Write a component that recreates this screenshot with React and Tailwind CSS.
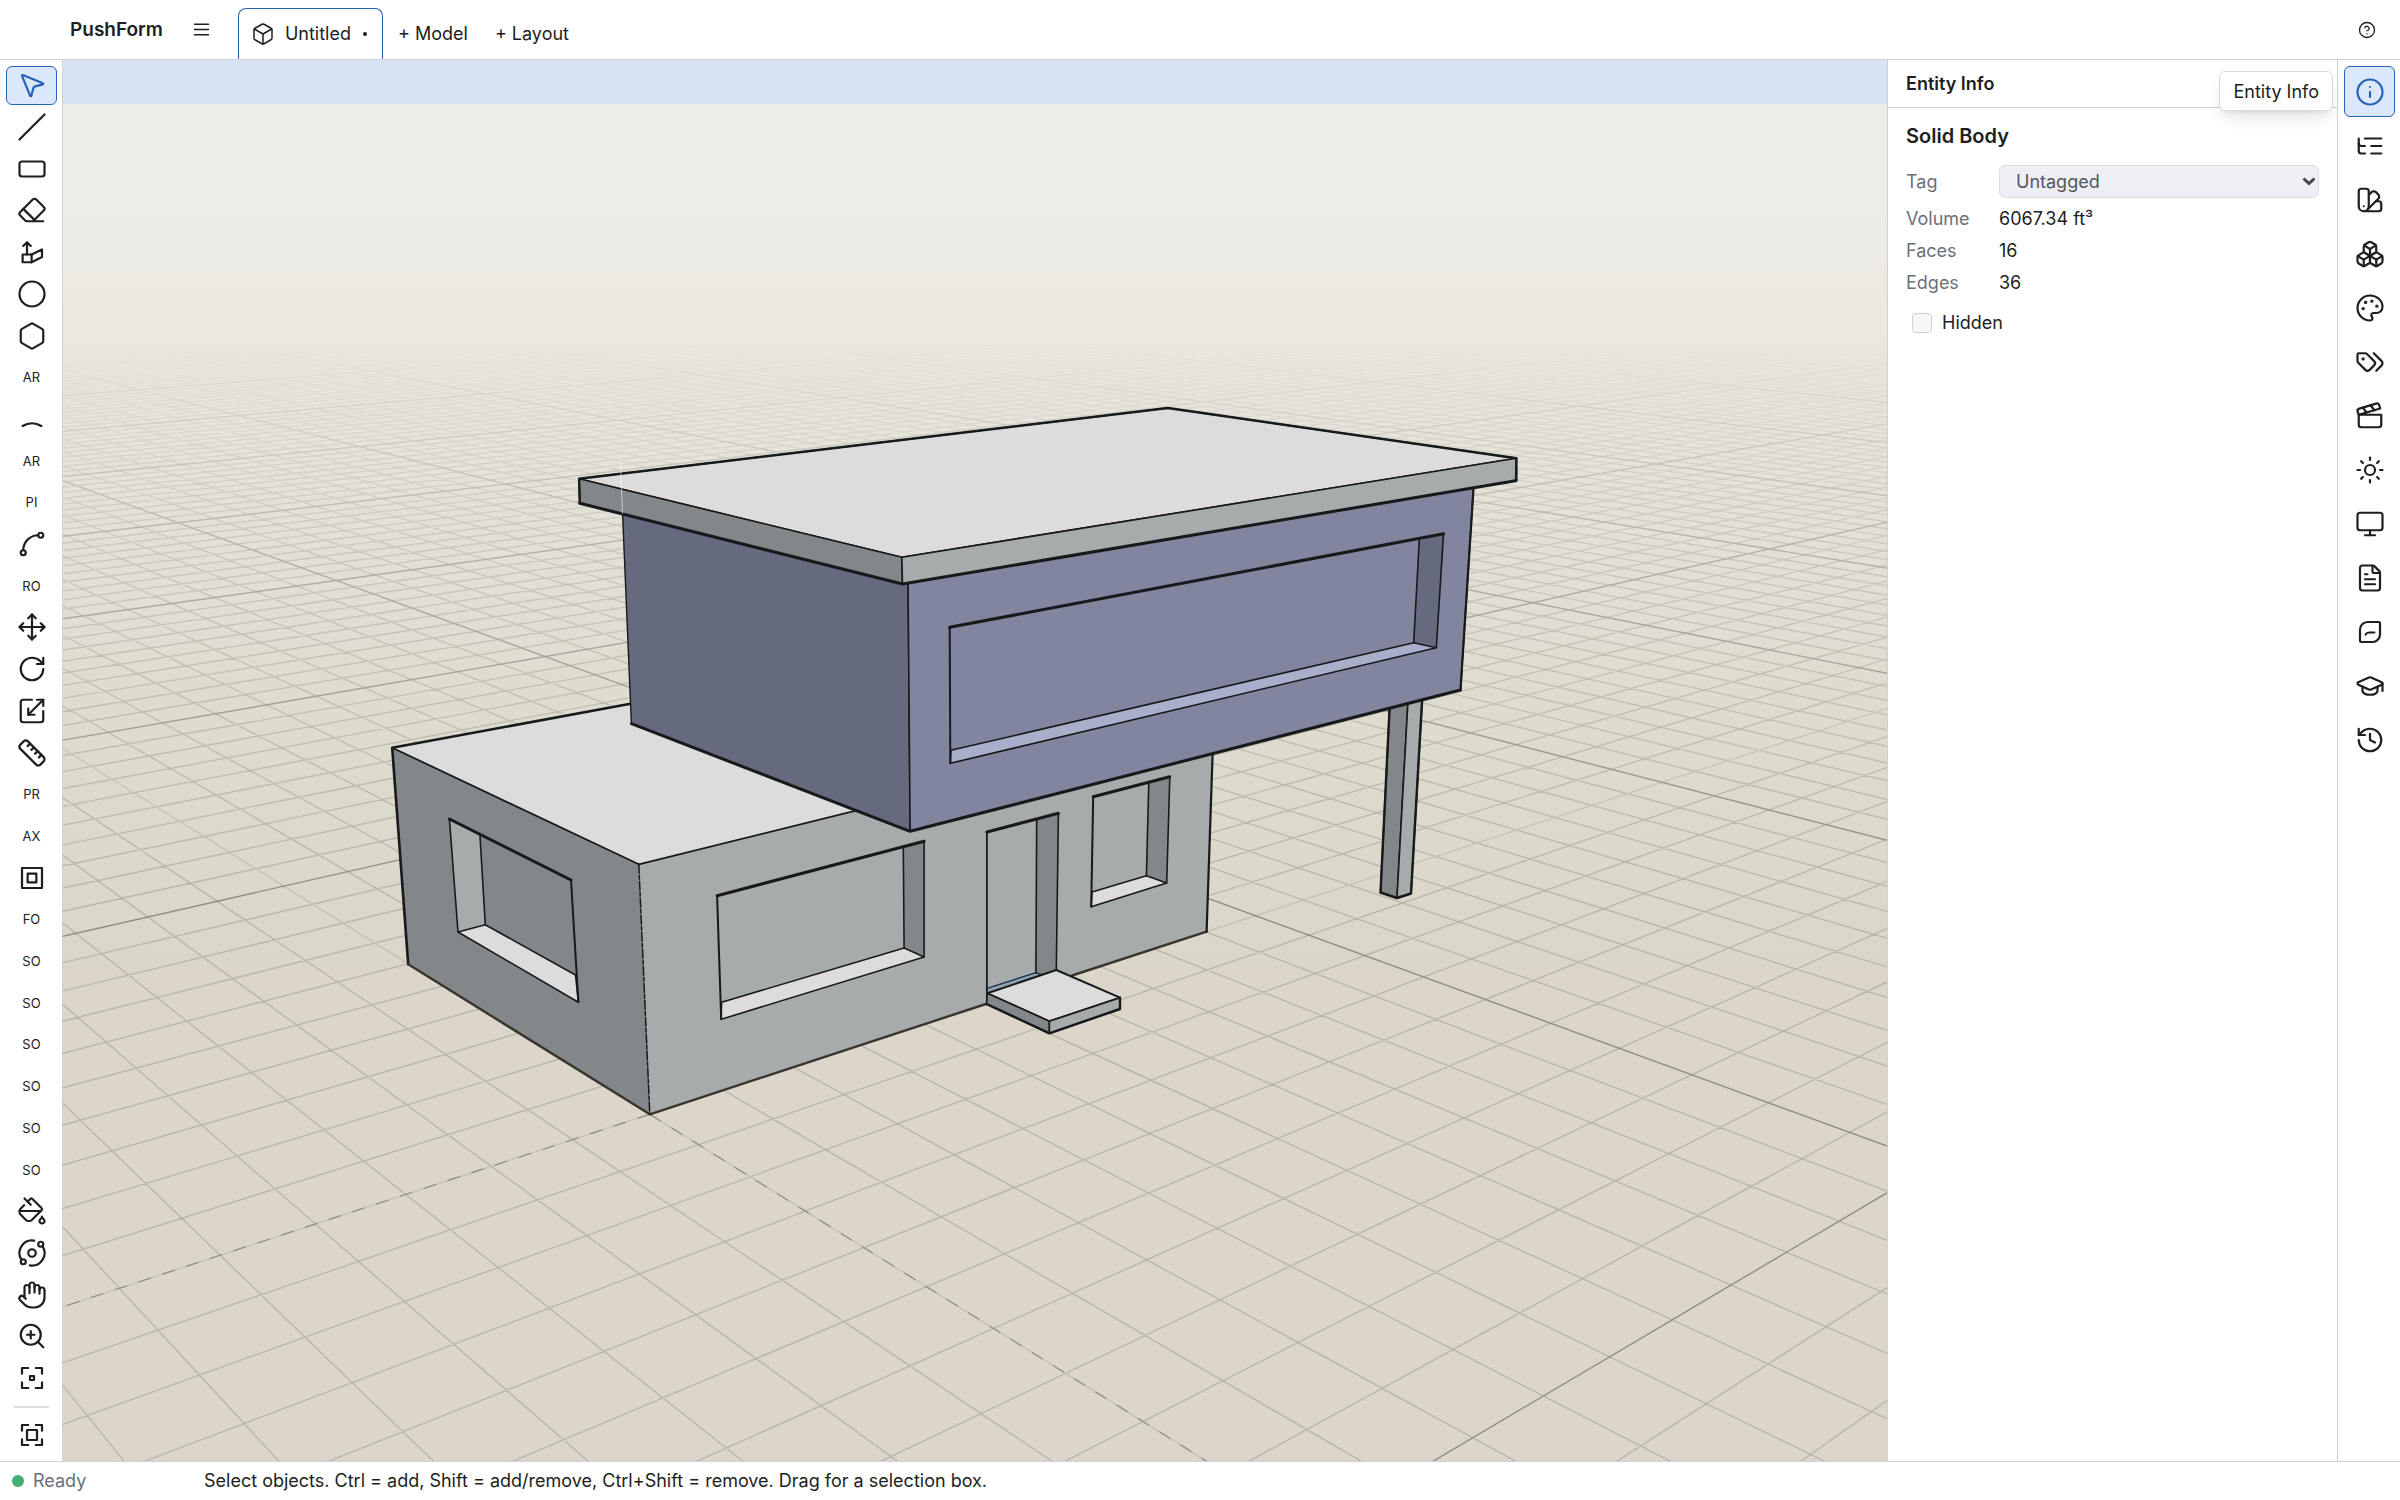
import { useState } from 'react';
import {
  Box,
  Boxes,
  Circle,
  CircleHelp,
  Clapperboard,
  Eraser,
  FileText,
  GraduationCap,
  Hand,
  Hexagon,
  History,
  Info,
  Monitor,
  MousePointer2,
  Move,
  Orbit,
  PaintBucket,
  Palette,
  RectangleHorizontal,
  RotateCw,
  Ruler,
  Scaling,
  Slash,
  Spline,
  Sun,
  SwatchBook,
  ZoomIn,
} from 'lucide-react';

function classNames(...classes) {
  return classes.filter(Boolean).join(' ');
}

// ---- Icons the package does not have ----
function Glyph({ size = 30, strokeWidth = 1.75, children }) {
  return (
    <svg
      width={size}
      height={size}
      viewBox="0 0 24 24"
      fill="none"
      stroke="currentColor"
      strokeWidth={strokeWidth}
      strokeLinecap="round"
      strokeLinejoin="round"
      aria-hidden="true"
    >
      {children}
    </svg>
  );
}

const MenuIcon = (props) => (
  <Glyph {...props}>
    <path d="M4 6h16M4 12h16M4 18h16" />
  </Glyph>
);

const PushPullIcon = (props) => (
  <Glyph {...props}>
    <path d="M8 14V4.5M5 7.2l3-3 3 3" />
    <path d="M4.5 14h7.2v6.2H4.5z" />
    <path d="M11.7 14 20 10v6l-8.3 4.2" />
  </Glyph>
);

const ArcIcon = (props) => (
  <Glyph {...props}>
    <path d="M4.5 17.6c4.6-2.9 10.4-2.9 15 0" />
  </Glyph>
);

const OffsetIcon = (props) => (
  <Glyph {...props}>
    <path d="M4 4h16v16H4z" />
    <path d="M8.5 8.5h7v7h-7z" />
  </Glyph>
);

const FRAME = 'M4 8.5V4h5M15 4h5v4.5M20 15.5V20h-5M9 20H4v-4.5';

const ZoomSelectionIcon = (props) => (
  <Glyph {...props}>
    <path d={FRAME} />
    <path d="M10.4 10.4h3.2v3.2h-3.2z" />
  </Glyph>
);

const ZoomExtentsIcon = (props) => (
  <Glyph {...props}>
    <path d={FRAME} />
    <path d="M8 8h8v8H8z" />
  </Glyph>
);

const OutlinerIcon = (props) => (
  <Glyph {...props}>
    <path d="M21 12h-8M21 6H8M21 18h-8" />
    <path d="M3 6v4c0 1.1.9 2 2 2h3" />
    <path d="M3 10v6c0 1.1.9 2 2 2h3" />
  </Glyph>
);

const TagsIcon = (props) => (
  <Glyph {...props}>
    <path d="m15 5 6.3 6.3a2.4 2.4 0 0 1 0 3.4L17 19" />
    <path d="M9.586 5.586A2 2 0 0 0 8.172 5H3a1 1 0 0 0-1 1v5.172a2 2 0 0 0 .586 1.414L8.29 18.29a2.426 2.426 0 0 0 3.42 0l3.58-3.58a2.426 2.426 0 0 0 0-3.42z" />
    <circle cx="6.5" cy="9.5" r=".5" fill="currentColor" />
  </Glyph>
);

const SoftenIcon = (props) => (
  <Glyph {...props}>
    <path d="M4 10a6 6 0 0 1 6-6h9a1 1 0 0 1 1 1v9a6 6 0 0 1-6 6H5a1 1 0 0 1-1-1z" />
    <path d="M8.5 14c.6-1.1 1.6-1.6 3-1.6h4" />
  </Glyph>
);

// ---- Tool lists ----
const TOOLS = [
  { name: 'Select', icon: MousePointer2 },
  { name: 'Line', icon: Slash },
  { name: 'Rectangle', icon: RectangleHorizontal },
  { name: 'Eraser', icon: Eraser },
  { name: 'Push/Pull', icon: PushPullIcon },
  { name: 'Circle', icon: Circle },
  { name: 'Polygon', icon: Hexagon },
  { name: 'Arc', short: 'AR' },
  { name: '2 Point Arc', icon: ArcIcon },
  { name: '3 Point Arc', short: 'AR' },
  { name: 'Pie', short: 'PI' },
  { name: 'Curve', icon: Spline },
  { name: 'Rotated Rectangle', short: 'RO' },
  { name: 'Move', icon: Move },
  { name: 'Rotate', icon: RotateCw },
  { name: 'Scale', icon: Scaling },
  { name: 'Tape Measure', icon: Ruler },
  { name: 'Protractor', short: 'PR' },
  { name: 'Axes', short: 'AX' },
  { name: 'Offset', icon: OffsetIcon },
  { name: 'Follow Me', short: 'FO' },
  { name: 'Solid Union', short: 'SO' },
  { name: 'Solid Subtract', short: 'SO' },
  { name: 'Solid Intersect', short: 'SO' },
  { name: 'Solid Trim', short: 'SO' },
  { name: 'Solid Split', short: 'SO' },
  { name: 'Solid Shell', short: 'SO' },
  { name: 'Paint', icon: PaintBucket },
  { name: 'Orbit', icon: Orbit },
  { name: 'Pan', icon: Hand },
  { name: 'Zoom', icon: ZoomIn },
  { name: 'Zoom Selection', icon: ZoomSelectionIcon },
];

const PANELS = [
  { name: 'Entity Info', icon: Info },
  { name: 'Outliner', icon: OutlinerIcon },
  { name: 'Materials', icon: SwatchBook },
  { name: 'Components', icon: Boxes },
  { name: 'Styles', icon: Palette },
  { name: 'Tags', icon: TagsIcon },
  { name: 'Scenes', icon: Clapperboard },
  { name: 'Shadows', icon: Sun },
  { name: 'Display', icon: Monitor },
  { name: 'Model Info', icon: FileText },
  { name: 'Soften Edges', icon: SoftenIcon },
  { name: 'Instructor', icon: GraduationCap },
  { name: 'History', icon: History },
];

// ---- Ground grid ----
// camera projection of ground point (i, j) to the screen
const depth = (i, j) => 1 - 0.0245 * i - 0.02912 * j;

function project(i, j) {
  const d = depth(i, j);
  return [
    ((-91.325 * i + 28.36 * j + 649.8) / d).toFixed(1),
    ((-2.565 * i - 2.992 * j + 1114.3) / d).toFixed(1),
  ];
}

const FAR = -170;
const NEAR = 0.3;

function gridPath(lines) {
  return lines
    .map(([axis, n]) => {
      // last point in front of the camera along the line
      const end = axis === 'i' ? (1 - NEAR - 0.0245 * n) / 0.02912 : (1 - NEAR - 0.02912 * n) / 0.0245;
      const a = axis === 'i' ? project(n, FAR) : project(FAR, n);
      const b = axis === 'i' ? project(n, end) : project(end, n);
      return `M${a.join(' ')}L${b.join(' ')}`;
    })
    .join('');
}

const MINOR = [];
const MAJOR = [];
for (let n = FAR; n <= 50; n++) {
  const list = n % 10 === 0 ? MAJOR : MINOR;
  if (n === 0) continue;
  list.push(['i', n], ['j', n]);
}

const INK = '#17191b';
const TOP = '#dcdcdc';
const SIDE_DARK = '#838789';
const SIDE = '#a7abac';

function Face({ points, fill, width = 1.6 }) {
  return <polygon points={points} fill={fill} stroke={INK} strokeWidth={width} strokeLinejoin="round" />;
}

function Edge({ d, width = 3, ...rest }) {
  return <path d={d} fill="none" stroke={INK} strokeWidth={width} strokeLinecap="round" strokeLinejoin="round" {...rest} />;
}

function House() {
  return (
    <g>
      {/* post */}
      <Face points="1390.5,690 1408.6,690 1397,898 1380.5,892.5" fill={SIDE_DARK} />
      <Face points="1408.6,690 1422.8,690 1411,893.5 1397,898" fill={SIDE} />
      <Edge d="M1390 700 1380.5 892.5 1397 898 1411 893.5 1422.400 695" width={2.4} />

      {/* ground floor */}
      <polygon points="392.2,747.7 680,692 1000,776 638.8,864.3" fill={TOP} />
      <polygon points="392.2,747.7 638.8,864.3 649.8,1114.3 408.2,964.3" fill={SIDE_DARK} />
      <polygon points="638.8,864.3 1212.8,722.8 1206.6,931.7 649.8,1114.3" fill={SIDE} />
      <Edge d="M638.8 864.3 392.2 747.7" width={1.8} />
      <Edge d="M638.8 864.3 860 809.7" width={1.8} />
      <Edge d="M640 702 392.2 747.7 408.2 964.3" width={2.6} />
      <Edge d="M408.2 964.3 649.8 1114.3 986 1004M1072 975.5 1206.6 931.7" width={2.4} stroke="#38352e" />
      <Edge d="M1206.6 931.7 1212.6 754" width={2.2} />
      <Edge d="M638.8 864.3 649.8 1114.3" width={1.5} strokeDasharray="9 2 4 2" />

      {/* left window */}
      <polygon points="449.4,819 480,836 485.3,924.7 458,932" fill={SIDE} />
      <Face points="458,932 485.3,924.7 575.5,975 578.4,1002.3" fill={TOP} />
      <Edge d="M458 932 449.4 819M480 836 485.3 924.7" width={1.6} />
      <Edge d="M449.4 819 571 880" />
      <Edge d="M571 880 578.4 1002.3" width={2} />

      {/* front window */}
      <polygon points="903.3,847 924.1,841.3 924.1,957 904.1,948" fill={SIDE_DARK} />
      <Face points="721.2,1019.3 721.6,1002.3 904.1,948 924.1,957" fill={TOP} />
      <Edge d="M903.3 847 904.1 948M924.1 842 924.1 957" width={1.6} />
      <Edge d="M717.1 895.7 924.1 841.3" />
      <Edge d="M717.1 895.7 721.2 1019.3" width={2} />

      {/* door */}
      <polygon points="1036.7,819.3 1058.4,813.3 1056.3,972 1035.9,977" fill={SIDE_DARK} />
      <polygon points="986.9,988.3 1035.9,972.7 1042,975 986.9,994" fill="#8ea3b0" />
      <Edge d="M987 988.3 1035.9 972.7 1042 975" width={1.4} stroke="#1d3347" />
      <Edge d="M1036.7 819.3 1035.9 973M1058.4 813.3 1056.3 970" width={1.6} />
      <Edge d="M986.9 832 1058.4 813.3" />
      <Edge d="M986.9 832V1004" width={1.8} />
      <Face points="987.3,993.3 1056.3,970 1120,997.7 1049.4,1021.3" fill={TOP} width={2} />
      <Face points="987.3,993.3 1049.4,1021.3 1049.4,1033.3 986.5,1004" fill={SIDE_DARK} />
      <Face points="1049.4,1021.3 1120,997.7 1120,1009 1049.4,1033.3" fill={SIDE} />
      <Edge d="M986.5 1004 1049.4 1033.3 1120 1009V997.7" width={2.4} />

      {/* small window */}
      <polygon points="1148.8,782.3 1169.8,776.7 1166.7,883 1146.4,875.7" fill={SIDE_DARK} />
      <Face points="1091.2,906.7 1092,892 1146.4,875.7 1166.7,883" fill={TOP} />
      <Edge d="M1148.8 782.3 1146.4 875.7M1169.8 777 1166.7 883" width={1.6} />
      <Edge d="M1093.2 796.7 1169.8 776.7" />
      <Edge d="M1093.2 796.7 1091.2 906.7" width={2} />

      {/* upper floor, selected */}
      <Face points="622,500 908,575 910.1,831.3 631.4,723.7" fill="#666a7f" width={1.4} />
      <Face points="908,575 1474,480 1460.5,690 910.1,831.3" fill="#81859e" />
      <Edge d="M631.4 723.7 910.1 831.3 1460.5 690" />
      <Edge d="M1460.5 690 1473.6 487" width={2.2} />
      <polygon points="1419.3,540 1443.7,533.7 1436.3,647.7 1413.7,642.7" fill="#666a7f" />
      <Face points="950.3,763.3 951,750.3 1413.7,642.7 1436.3,647.7" fill="#a9aecb" />
      <Edge d="M1419.3 540 1413.7 642.7M1443.5 534 1436.3 647.7" width={1.6} />
      <Edge d="M949.7 627.3 1443.7 533.7" />
      <Edge d="M949.7 627.3 950.3 763.3" width={2} />

      {/* roof */}
      <Face points="579.1,478.7 1167.8,408 1516.4,458.3 901.8,557.3" fill={TOP} />
      <Face points="579.1,478.7 901.8,557.3 902.5,584 579.8,503.3" fill={SIDE_DARK} />
      <Face points="901.8,557.3 1516.4,458.3 1515.5,480.7 902.5,584" fill={SIDE} />
      <Edge d="M579.8 503.3 579.1 478.7 1167.8 408 1516.4 458.3V480.7" width={2.4} />
      <Edge d="M579.8 503.3 902.5 584 1515.5 480.7" />
      <path d="M620.5 460 622.5 514" stroke="#fff" strokeOpacity="0.55" strokeWidth="1" />
    </g>
  );
}

function Viewport() {
  return (
    <svg
      className="block h-full w-full"
      viewBox="63 60 1824 1401"
      preserveAspectRatio="xMidYMid slice"
      role="img"
      aria-label="3D model view"
    >
      <defs>
        <linearGradient id="ground" gradientUnits="userSpaceOnUse" x1="0" y1="103" x2="0" y2="1103">
          <stop offset="0" stopColor="#edede8" />
          <stop offset="0.1" stopColor="#edece6" />
          <stop offset="0.25" stopColor="#eae7df" />
          <stop offset="0.4" stopColor="#e4e2d8" />
          <stop offset="0.6" stopColor="#dedbcf" />
          <stop offset="0.8" stopColor="#dbd7cb" />
          <stop offset="0.9" stopColor="#dcd5c9" />
          <stop offset="1" stopColor="#dcd5c9" />
        </linearGradient>
        <linearGradient id="fog" gradientUnits="userSpaceOnUse" x1="0" y1="340" x2="0" y2="900">
          <stop offset="0" stopColor="#fff" stopOpacity="0" />
          <stop offset="0.12" stopColor="#fff" stopOpacity="0.2" />
          <stop offset="0.4" stopColor="#fff" stopOpacity="0.6" />
          <stop offset="1" stopColor="#fff" stopOpacity="1" />
        </linearGradient>
        <mask id="fade" maskUnits="userSpaceOnUse" x="0" y="0" width="2400" height="1500">
          <rect width="2400" height="1500" fill="url(#fog)" />
        </mask>
      </defs>

      <rect x="-2000" y="-1000" width="6000" height="1104" fill="#d8e3f6" />
      <rect x="-2000" y="104" width="6000" height="3000" fill="url(#ground)" />

      <g mask="url(#fade)" fill="none">
        <path d={gridPath(MINOR)} stroke="#b9b6ab" strokeWidth="1.4" />
        <path d={gridPath([['i', 0], ['j', 0]])} stroke="#c6c1b6" strokeWidth="1.4" />
        <path d={gridPath(MAJOR)} stroke="#8f8e86" strokeWidth="1.4" />
        <path
          d={`M${project(0, 0).join(' ')}L${project(12, 0).join(' ')}M${project(0, 0).join(' ')}L${project(0, 12).join(' ')}`}
          stroke="#8f8e86"
          strokeWidth="1.2"
          strokeDasharray="13 12"
        />
      </g>

      <House />
    </svg>
  );
}

// ---- Side rails ----
function ToolButton({ tool, active, onClick }) {
  const Icon = tool.icon;
  return (
    <button
      type="button"
      aria-label={tool.name}
      aria-pressed={active}
      onClick={onClick}
      className={classNames(
        'flex min-h-0 w-full flex-1 items-center justify-center rounded-md border text-[13px]',
        active ? 'border-[#2563b8] bg-[#dbe7fa] text-[#2563b8]' : 'border-transparent',
      )}
    >
      {Icon ? <Icon size={30} strokeWidth={1.75} /> : tool.short}
    </button>
  );
}

function PanelRail({ active, onSelect }) {
  return (
    <nav aria-label="Panels" className="flex w-[63px] shrink-0 flex-col gap-[3px] border-l border-[#cfd1d8] py-1.5 pr-[5px] pl-1.5">
      {PANELS.map(({ name, icon: Icon }) => (
        <button
          key={name}
          type="button"
          aria-label={name}
          aria-pressed={active === name}
          onClick={() => onSelect(name)}
          className={classNames(
            'relative flex h-[51px] w-full items-center justify-center rounded-md border',
            active === name ? 'border-[#2563b8] bg-[#dbe7fa] text-[#2563b8]' : 'border-transparent',
          )}
        >
          <Icon size={30} strokeWidth={1.75} />
          {active === name && (
            <span
              role="tooltip"
              className="absolute top-1 right-full z-10 mr-3 flex h-10 items-center rounded-md border border-[#d9dbe0] bg-white px-[13px] pt-px text-lg whitespace-nowrap text-[#1c1e21] shadow-lg"
            >
              {name}
            </span>
          )}
        </button>
      ))}
    </nav>
  );
}

function Row({ label, children }) {
  return (
    <div className="grid h-8 grid-cols-[93px_1fr] items-center">
      <dt className="text-[#6b707b]">{label}</dt>
      <dd>{children}</dd>
    </div>
  );
}

function EntityInfo() {
  return (
    <aside className="w-[450px] shrink-0 border-l border-[#cfd1d8]">
      <h2 className="flex h-12 items-center border-b border-[#cfd1d8] px-[18px] pt-px font-semibold">Entity Info</h2>
      <div className="px-[18px] pt-3.5">
        <h3 className="text-xl leading-7 font-semibold">Solid Body</h3>
        <div className="mt-[15px] mb-[5px] grid grid-cols-[93px_1fr] items-center">
          <label htmlFor="tag" className="text-[#6b707b]">Tag</label>
          <div className="relative">
            <select
              id="tag"
              className="block h-[33px] w-full appearance-none rounded-md border border-[#dcdde3] bg-[#eeeff4] pl-4 text-lg leading-7 text-[#53565c]"
            >
              <option>Untagged</option>
            </select>
            <svg
              className="pointer-events-none absolute top-3 right-[3px]"
              width="14"
              height="9"
              viewBox="0 0 14 9"
              fill="none"
              stroke="#44474c"
              strokeWidth="3"
              aria-hidden="true"
            >
              <path d="M1.5 1.5 7 6.5l5.5-5" />
            </svg>
          </div>
        </div>
        <dl>
          <Row label="Volume">6067.34 ft³</Row>
          <Row label="Faces">16</Row>
          <Row label="Edges">36</Row>
        </dl>
        <label className="mt-2 ml-1.5 flex h-8 items-center gap-2.5">
          <input type="checkbox" className="size-5 appearance-none rounded-sm border border-[#cfcfd2] bg-[#f7f7f7] checked:bg-[#2563b8]" />
          Hidden
        </label>
      </div>
    </aside>
  );
}

// ---- Main export ----
export default function App() {
  const [tool, setTool] = useState('Select');
  const [panel, setPanel] = useState('Entity Info');

  return (
    <div className="flex h-screen flex-col overflow-hidden bg-white font-['Inter',sans-serif] text-lg text-[#1c1e21]">
      <header className="flex h-[60px] shrink-0 items-center border-b border-[#cfd1d8] pr-6 pl-[70px]">
        <h1 className="pt-px text-[19px] font-semibold">PushForm</h1>
        <button type="button" aria-label="Menu" className="ml-[26px] p-0.5">
          <MenuIcon size={21} />
        </button>
        <div className="ml-6 flex h-full items-end">
          <button
            type="button"
            className="flex h-[51px] items-center rounded-t-lg border border-b-0 border-[#2563b8] pr-[15px] pl-3"
          >
            <Box size={24} strokeWidth={1.5} />
            <span className="ml-2.5">Untitled</span>
            <span className="ml-3 size-1 rounded-full bg-[#1c1e21]" />
          </button>
          <button type="button" className="h-[51px] px-[15px]">+ Model</button>
          <button type="button" className="h-[51px] px-3">+ Layout</button>
        </div>
        <button type="button" aria-label="Help" className="ml-auto">
          <CircleHelp size={18} strokeWidth={1.75} />
        </button>
      </header>

      <div className="flex min-h-0 flex-1">
        <nav aria-label="Tools" className="flex w-[63px] shrink-0 flex-col gap-[3px] border-r border-[#cfd1d8] pt-1.5 pr-[5px] pb-[7px] pl-1.5">
          {TOOLS.map((t) => (
            <ToolButton key={t.name} tool={t} active={tool === t.name} onClick={() => setTool(t.name)} />
          ))}
          <hr className="mx-2 my-[5px] border-t-2 border-[#dadce2]" />
          <ToolButton tool={{ name: 'Zoom Extents', icon: ZoomExtentsIcon }} active={false} onClick={() => {}} />
        </nav>
        <main className="min-w-0 flex-1">
          <Viewport />
        </main>
        <EntityInfo />
        <PanelRail active={panel} onSelect={setPanel} />
      </div>

      <footer className="flex h-[39px] shrink-0 items-center border-t border-[#cfd1d8] pl-3">
        <span className="size-3 rounded-full bg-[#43b072]" />
        <span className="ml-[9px] w-[171px] text-[#6b707b]">Ready</span>
        <span>Select objects. Ctrl = add, Shift = add/remove, Ctrl+Shift = remove. Drag for a selection box.</span>
      </footer>
    </div>
  );
}
